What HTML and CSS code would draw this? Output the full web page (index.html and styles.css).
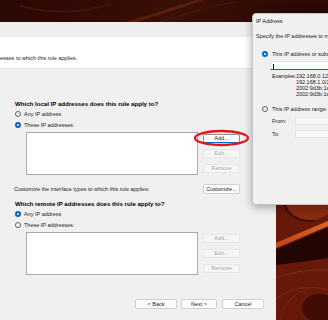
FILE: index.html
```html
<!DOCTYPE html>
<html>
<head>
    <meta charset="utf-8">
    <link rel="stylesheet" href="styles.css">
</head>
<body>
<div class="desktop">
    <!-- desktop wallpaper behind the windows -->
    <svg class="wallpaper" width="328" height="320" viewBox="0 0 328 320">
        <defs>
            <linearGradient id="sky" x1="0" y1="0" x2="1" y2="0">
                <stop offset="0" stop-color="#2a0804"/>
                <stop offset="0.55" stop-color="#3a0f06"/>
                <stop offset="1" stop-color="#2a0804"/>
            </linearGradient>
            <linearGradient id="band" x1="0" y1="1" x2="1" y2="0">
                <stop offset="0" stop-color="#b8431a"/>
                <stop offset="1" stop-color="#e06426"/>
            </linearGradient>
        </defs>
        <rect width="328" height="320" fill="url(#sky)"/>
        <path d="M118 26 Q165 12 212 -4" stroke="#6a230f" stroke-width="3" fill="none" opacity="0.7"/>
        <path d="M150 26 Q190 10 236 2" stroke="#4e190b" stroke-width="1" fill="none"/>
        <path d="M20 6 Q70 18 110 4" stroke="#45130a" stroke-width="2" fill="none"/>
        <path d="M260 200 H330 V320 H260 Z" fill="#661909"/>
        <path d="M286 204 Q292 220 312 220 Q322 219 330 212 L330 204 Z" fill="#842c11"/>
        <path d="M284 204 Q290 222 314 221" stroke="#3a0a05" stroke-width="1.5" fill="none"/>
        <path d="M270 252 Q300 240 330 226 L330 258 Q300 262 270 266 Z" fill="#230504"/>
        <path d="M268 249 Q298 236 332 222" stroke="url(#band)" stroke-width="5" fill="none"/>
        <path d="M270 280 Q300 268 330 270" stroke="#93341a" stroke-width="0.7" fill="none"/>
        <path d="M275 300 Q295 282 330 290" stroke="#8a3016" stroke-width="0.7" fill="none"/>
        <path d="M280 320 Q285 295 310 288" stroke="#7e2a14" stroke-width="0.7" fill="none"/>
        <ellipse cx="320" cy="308" rx="18" ry="14" fill="#3a0905" opacity="0.8"/>
    </svg>

    <div class="window wizard">
        <div class="titlebar"></div>
        <div class="header">
            <p>esses to which this rule applies.</p>
        </div>
        <div class="content">
            <div class="scope">
                <h2>Which local IP addresses does this rule apply to?</h2>
                <div class="radio"><span class="dot"></span>Any IP address</div>
                <div class="radio checked"><span class="dot"></span>These IP addresses:</div>
                <div class="list-row">
                    <div class="listbox"></div>
                    <div class="side-buttons">
                        <button class="btn focused">Add...</button>
                        <button class="btn" disabled>Edit...</button>
                        <button class="btn" disabled>Remove</button>
                    </div>
                </div>
            </div>

            <div class="customize-row">
                <span>Customize the interface types to which this rule applies:</span>
                <button class="btn wide">Customize...</button>
            </div>

            <div class="scope remote">
                <h2>Which remote IP addresses does this rule apply to?</h2>
                <div class="radio checked"><span class="dot"></span>Any IP address</div>
                <div class="radio"><span class="dot"></span>These IP addresses:</div>
                <div class="list-row">
                    <div class="listbox"></div>
                    <div class="side-buttons">
                        <button class="btn" disabled>Add...</button>
                        <button class="btn" disabled>Edit...</button>
                        <button class="btn" disabled>Remove</button>
                    </div>
                </div>
            </div>

            <div class="footer">
                <button class="btn back">&lt; Back</button>
                <button class="btn next">Next &gt;</button>
                <button class="btn cancel">Cancel</button>
            </div>
        </div>
    </div>

    <div class="window ip-dialog">
        <div class="dialog-title">IP Address</div>
        <p class="hint">Specify the IP addresses to match:</p>
        <div class="radio checked"><span class="dot"></span>This IP address or subnet:</div>
        <div class="ip-input"><span class="caret"></span></div>
        <div class="examples">
            <span>Examples:</span>
            <div class="values">
                <div>192.168.0.12</div>
                <div>192.168.1.0/24</div>
                <div>2002:9d3b:1a31:4:208:74ff:fe39:6c43</div>
                <div>2002:9d3b:1a31:4:208:74ff:fe39:0/112</div>
            </div>
        </div>
        <div class="radio range"><span class="dot"></span>This IP address range:</div>
        <div class="range-row first"><span>From:</span><div class="range-input"></div></div>
        <div class="range-row"><span>To:</span><div class="range-input"></div></div>
    </div>

    <!-- red marker drawn round the Add button -->
    <svg class="marker" width="60" height="22" viewBox="0 0 60 22">
        <ellipse cx="29.5" cy="11" rx="26.5" ry="7" stroke="#e3141c" stroke-width="2.3" fill="none"/>
    </svg>
</div>
</body>
</html>
```

FILE: styles.css
```css
* {
    box-sizing: border-box;
}
body {
    margin: 0;
    font-family: "Liberation Sans", Arial, sans-serif;
    font-size: 5.5px;
    color: #1b1b1b;
}
.desktop {
    position: relative;
    width: 328px;
    height: 320px;
    overflow: hidden;
}
.wallpaper {
    position: absolute;
    left: 0;
    top: 0;
}

/* windows sit on the desktop */
.window {
    position: absolute;
    background: #f0f0f0;
}
.wizard {
    left: 0;
    top: 22px;
    width: 276px;
    height: 310px;
    display: flex;
    flex-direction: column;
}
.titlebar {
    height: 15px;
    background: #eeeeee;
}
.header {
    height: 32px;
    background: #ffffff;
    border-bottom: 1px solid #e2e2e2;
    padding-top: 17px;
}
.header p {
    margin: 0;
    line-height: 8px;
}
.content {
    flex: 1;
    padding: 31px 12px 0 14px;
}
h2 {
    margin: 0;
    padding-left: 1px;
    font-size: 6.1px;
    font-weight: bold;
    line-height: 8px;
    color: #000;
}

/* radio buttons */
.radio {
    display: flex;
    align-items: center;
    gap: 3px;
    height: 11px;
    padding-left: 1px;
}
.dot {
    width: 6px;
    height: 6px;
    border-radius: 50%;
    border: 1px solid #5c5c5c;
    background: #fbfbfb;
}
.radio.checked .dot {
    border: 2px solid #0067c0;
    background: #ffffff;
}

.list-row {
    display: flex;
    gap: 5px;
    margin-top: 2px;
    margin-left: 12px;
}
.listbox {
    width: 172px;
    height: 43px;
    background: #ffffff;
    border: 1px solid #a9a9a9;
}
.side-buttons {
    display: flex;
    flex-direction: column;
    gap: 6px;
    padding-top: 2px;
}

/* push buttons */
.btn {
    width: 37px;
    height: 9px;
    padding: 0;
    font-family: inherit;
    font-size: 5.5px;
    line-height: 7px;
    color: #1b1b1b;
    background: #fdfdfd;
    border: 1px solid #d0d0d0;
    border-radius: 2px;
}
.btn:disabled {
    background: #f6f6f6;
    border-color: #e6e6e6;
    color: #a6a6a6;
}
.btn.focused {
    border-color: #8e8e8e;
    border-bottom-color: #0067c0;
}
.btn.wide {
    height: 10px;
}

.customize-row {
    display: flex;
    justify-content: space-between;
    align-items: center;
    width: 226px;
    height: 10px;
    margin-top: 9px;
}
.remote {
    margin-top: 6px;
}
.footer {
    display: flex;
    justify-content: flex-end;
    margin-top: 24px;
}
.footer .btn {
    height: 10px;
}
.back {
    width: 42px;
}
.next {
    width: 36px;
    margin-left: 4px;
}
.cancel {
    width: 42px;
    margin-left: 5px;
}

/* IP Address dialog */
.ip-dialog {
    left: 252px;
    top: 13px;
    width: 100px;
    height: 192px;
    padding-left: 3px;
    border: 1px solid #c4c4c4;
    border-radius: 4px;
    box-shadow: 0 2px 8px rgba(0, 0, 0, 0.35);
}
.dialog-title {
    height: 15px;
    line-height: 15px;
}
.hint {
    margin: 3px 0 0;
    line-height: 8px;
}
.ip-dialog .radio {
    margin-top: 8px;
    padding-left: 6px;
    gap: 4px;
}
.ip-input {
    height: 9px;
    margin-top: 2px;
    margin-left: 14px;
    padding: 2px 0 0 2px;
    background: #ffffff;
    border: 1px solid #e4e4e4;
    border-bottom-color: #0067c0;
}
.caret {
    display: block;
    width: 1px;
    height: 5px;
    background: #000;
}
.examples {
    display: flex;
    margin-top: 3px;
    margin-left: 16px;
    line-height: 6px;
}
.examples span {
    width: 28px;
    letter-spacing: -0.2px;
}
.values {
    white-space: nowrap;
}
.ip-dialog .radio.range {
    margin-top: 6px;
}
.range-row {
    display: flex;
    align-items: center;
    height: 8px;
    margin-top: 5px;
    margin-left: 16px;
}
.range-row.first {
    margin-top: 3px;
}
.range-row span {
    width: 24px;
}
.range-input {
    width: 60px;
    height: 8px;
    background: #f8f8f8;
    border: 1px solid #e6e6e6;
}

.marker {
    position: absolute;
    left: 192px;
    top: 127px;
}
```
